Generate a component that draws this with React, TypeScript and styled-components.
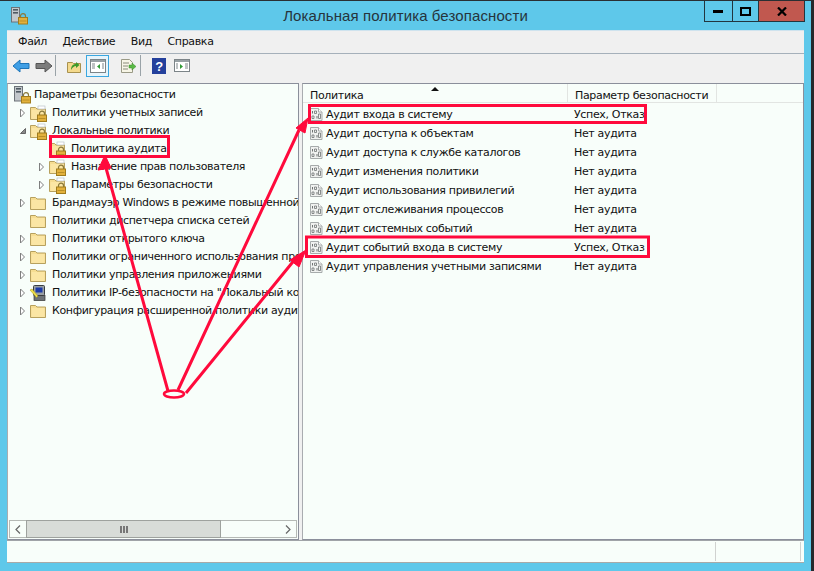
import React from "react";
import styled, { createGlobalStyle } from "styled-components";

const Global = createGlobalStyle`
  html, body { margin: 0; padding: 0; width: 814px; height: 571px; overflow: hidden; background: #5ec8ea; }
  * { box-sizing: border-box; }
`;
const Frame = styled.div`
  position: relative; width: 814px; height: 571px; background: #5ec8ea;
  border-top: 1px solid #2a2f33; border-right: 3px solid #25292c;
  font-family: "DejaVu Sans", sans-serif; font-size: 11px; letter-spacing: -0.34px; color: #111;
  display: flex; flex-direction: column; overflow: hidden;
`;
const TitleBar = styled.div`height: 29px; display: flex; position: relative; align-items: flex-start; padding-left: 10px;`;
const Title = styled.div`
  position: absolute; left: 0; right: 0; top: 6px; text-align: center; font-size: 15px; color: #26343c; letter-spacing: .1px;
  font-family: "Liberation Sans", sans-serif;
`;
const AppIcon = styled.div`margin-top: 5px; height: 18px;`;
const WinButtons = styled.div`margin-left: auto; display: flex; height: 21px; border: 1px solid #22363f; border-top: none; position: relative; margin-right: 6px; z-index: 1;`;
const WinButton = styled.div<{ $w: number; $close?: boolean }>`
  width: ${p => p.$w}px; display: flex; align-items: center; justify-content: center;
  background: ${p => (p.$close ? "#c1584f" : "#5ec8ea")};
  & + & { border-left: 1px solid #22363f; }
`;
const Client = styled.div`
  margin: 0 7px; height: 533px; background: #f0f0f0; display: flex; flex-direction: column;
  border-top: 1px solid #cfe3ee;
`;
const MenuBar = styled.div`height: 23px; display: flex; align-items: center; gap: 15.5px; padding-left: 11px; border-bottom: 1px solid #a5b0ba;`;
const ToolBar = styled.div`height: 29px; display: flex; align-items: flex-start; padding: 1px 0 0 2px;`;
const ToolButton = styled.div<{ $active?: boolean; $mr?: number }>`
  width: 23px; height: 22px; display: flex; align-items: center; justify-content: center; margin-right: ${p => p.$mr ?? 0}px;
  ${p => p.$active && "border: 1px solid #3aa7e0; background: #e6f4fb;"}
`;
const ToolSep = styled.div`width: 1px; height: 21px; background: #9aa3a8; margin-right: 6px;`;
const Panes = styled.div`height: 459px; display: flex;`;
const TreePane = styled.div`
  width: 292px; display: flex; flex-direction: column; background: #f8fefa;
  border: 1px solid #8b8f9b; border-left-color: #a9acb0; position: relative; padding-top: 2px;
`;
const Splitter = styled.div`width: 3px;`;
const ListPane = styled.div`flex: 1; background: #f8fefa; border: 1px solid #8b8f9b; border-left-color: #a9acb0; position: relative;`;
const TreeBody = styled.div`flex: 1; overflow: hidden;`;
const TreeRow = styled.div<{ $level: number }>`
  height: 18px; display: flex; align-items: center; white-space: nowrap; padding-left: ${p => p.$level * 19 + 8}px;
`;
const RootRow = styled(TreeRow)`padding-left: 5px;`;
const Twisty = styled.div`width: 13px; height: 18px; display: flex; align-items: center; justify-content: center; flex: none;`;
const NodeIcon = styled.div<{ $gap: number }>`width: 19px; height: 18px; flex: none; margin-right: ${p => p.$gap}px; display: flex; align-items: center;`;
const NodeLabel = styled.span``;
const ScrollBar = styled.div`height: 18px; margin: 0 0 1px 1px; display: flex; border: 1px solid #b5b9b5; background: #f8fefa; width: 288px;`;
const ScrollBtn = styled.div`width: 16px; display: flex; align-items: center; justify-content: center;`;
const Thumb = styled.div`
  width: 195px; background: #d8dcd8; border: 1px solid #9ea29e; margin: -1px 0; display: flex; align-items: center; justify-content: center; gap: 1px;
`;
const Grip = styled.i`width: 2px; height: 7px; background: #777;`;
const ScrollGap = styled.div`flex: 1;`;
const Header = styled.div`height: 19px; display: flex; border-bottom: 1px solid #e2e5e2; position: relative;`;
const HeaderCell = styled.div<{ $w: number }>`
  width: ${p => p.$w}px; padding: 4px 0 0 7px; border-right: 1px solid #e2e5e2; line-height: 15px;
`;
const SortMark = styled.div`position: absolute; left: 128px; top: 3px; width: 0; height: 0; border: 4px solid transparent; border-top: 0; border-bottom: 4px solid #111;`;
const RowsBox = styled.div`padding-top: 2px;`;
const ListRow = styled.div`height: 19px; display: flex; align-items: center; white-space: nowrap;`;
const NameCell = styled.div`width: 265px; padding-left: 6px; display: flex; align-items: center; gap: 2px;`;
const ValueCell = styled.div`padding-left: 6px;`;
const StatusBar = styled.div`height: 23px; display: flex; background: #f8fefa; border-top: 1px solid #a0a4a8; border-bottom: 1px solid #a8aaa8;`;
const StatusCell = styled.div<{ $w: number }>`width: ${p => p.$w}px; margin: 1px 0; border-right: 1px solid #d0d2d0;`;
const Overlay = styled.svg`position: absolute; left: 0; top: -1px; pointer-events: none;`;

const Lock = ({ x = 0, y = 0 }: { x?: number; y?: number }) => (
  <g transform={`translate(${x} ${y})`}>
    <path d="M2.500 4V2.600a2.500 2.500 0 0 1 5 0V4" fill="none" stroke="#8a7a3c" strokeWidth="1.200" />
    <rect x=".5" y="4" width="9" height="6.500" fill="#e2b13c" stroke="#a07c1c" />
    <rect x="1.500" y="7" width="7" height="1" fill="#b98f26" />
  </g>
);
const Folder = ({ lock }: { lock?: boolean }) => (
  <svg width="19" height="18" viewBox="0 0 19 18">
    <path d="M1.500 15.500V3.500h5l1.500 1.500h8.500v10.500z" fill="#f6dd92" stroke="#b7a15e" />
    <rect x="2.500" y="6" width="13" height="9" fill="#fbe6a4" />
    {lock && <rect x="9" y="2" width="7" height="3" fill="#fff" stroke="#b0b8c0" strokeWidth=".6" />}
    {lock && <Lock x={8} y={7} />}
  </svg>
);
const ServerIcon = () => (
  <svg width="19" height="19" viewBox="0 0 19 19">
    <rect x="1.500" y="1.500" width="8" height="14.500" fill="#c3c8cc" stroke="#6c7378" />
    <rect x="3" y="3" width="5" height="1.600" fill="#4f5a62" />
    <rect x="3" y="6" width="5" height="1.600" fill="#4f5a62" />
    <Lock x={8} y={7.500} />
  </svg>
);
const IpIcon = () => (
  <svg width="19" height="18" viewBox="0 0 19 18">
    <rect x="4.500" y="1.500" width="11" height="10" rx="1" fill="#9aa0a4" stroke="#3a3e42" />
    <rect x="6.500" y="3.500" width="7" height="5" fill="#1c3aa8" />
    <rect x="5" y="11.500" width="11" height="5" fill="#6d7276" stroke="#333" strokeWidth=".7" />
    <path d="M1 6l2-1 6 7-1.500 1.500z" fill="#f1e04a" stroke="#a59518" strokeWidth=".5" />
  </svg>
);
const Closed = () => (
  <svg width="7" height="10" viewBox="0 0 7 10"><path d="M1.500 1l4 4-4 4z" fill="#fff" stroke="#7f7f7f" /></svg>
);
const Opened = () => (
  <svg width="8" height="8" viewBox="0 0 8 8"><path d="M6.500 1.500v5h-5z" fill="#8a8a8a" stroke="#666" /></svg>
);
const AuditIcon = () => (
  <svg width="15" height="15" viewBox="0 0 15 15">
    <path d="M1.500 1.500h8l3.500 3.500v8.500H1.500z" fill="#f0f2f0" stroke="#a6abab" />
    <path d="M9.500 1.500V5H13" fill="#fff" stroke="#a6abab" />
    <path d="M3.500 4v2.500M8 9v2.500" stroke="#6f7373" />
    <path d="M5.500 4h2v2.500h-2zM3 9h2v2.500H3zM9.500 7h2v4.500h-2z" fill="none" stroke="#6f7373" strokeWidth=".8" />
  </svg>
);

const treeRows: { label: string; level: number; twisty?: "c" | "o"; icon: "lock" | "plain" | "ip" }[] = [
  { label: "Политики учетных записей", level: 1, twisty: "c", icon: "lock" },
  { label: "Локальные политики", level: 1, twisty: "o", icon: "lock" },
  { label: "Политика аудита", level: 2, icon: "lock" },
  { label: "Назначение прав пользователя", level: 2, twisty: "c", icon: "lock" },
  { label: "Параметры безопасности", level: 2, twisty: "c", icon: "lock" },
  { label: "Брандмауэр Windows в режиме повышенной безопасности", level: 1, twisty: "c", icon: "plain" },
  { label: "Политики диспетчера списка сетей", level: 1, icon: "plain" },
  { label: "Политики открытого ключа", level: 1, twisty: "c", icon: "plain" },
  { label: "Политики ограниченного использования программ", level: 1, twisty: "c", icon: "plain" },
  { label: "Политики управления приложениями", level: 1, twisty: "c", icon: "plain" },
  { label: "Политики IP-безопасности на \"Локальный компьютер\"", level: 1, twisty: "c", icon: "ip" },
  { label: "Конфигурация расширенной политики аудита", level: 1, twisty: "c", icon: "plain" },
];
const listRows = [
  ["Аудит входа в систему", "Успех, Отказ"],
  ["Аудит доступа к объектам", "Нет аудита"],
  ["Аудит доступа к службе каталогов", "Нет аудита"],
  ["Аудит изменения политики", "Нет аудита"],
  ["Аудит использования привилегий", "Нет аудита"],
  ["Аудит отслеживания процессов", "Нет аудита"],
  ["Аудит системных событий", "Нет аудита"],
  ["Аудит событий входа в систему", "Успех, Отказ"],
  ["Аудит управления учетными записями", "Нет аудита"],
];

const TreeClip = styled.div`overflow: hidden; width: 100%; min-width: 0; flex: 1;`;

export default function App() {
  return (
    <Frame>
      <Global />
      <TitleBar>
        <AppIcon><ServerIcon /></AppIcon>
        <Title>Локальная политика безопасности</Title>
        <WinButtons>
          <WinButton $w={27}>
            <svg width="11" height="4"><rect width="10" height="3" y="1" fill="#000" /></svg>
          </WinButton>
          <WinButton $w={26}>
            <svg width="11" height="9"><rect x="1" y="1" width="9" height="7" fill="none" stroke="#000" strokeWidth="2" /></svg>
          </WinButton>
          <WinButton $w={46} $close>
            <svg width="10" height="9"><path d="M1 .5l8 8M9 .5l-8 8" stroke="#000" strokeWidth="2.200" /></svg>
          </WinButton>
        </WinButtons>
      </TitleBar>
      <Client>
        <MenuBar>
          <span>Файл</span><span>Действие</span><span>Вид</span><span>Справка</span>
        </MenuBar>
        <ToolBar>
          <ToolButton>
            <svg width="18" height="14" viewBox="0 0 18 14"><path d="M1 7l7-6v3.500h9v5H8V13z" fill="#3f9fe6" stroke="#1d74b8" /></svg>
          </ToolButton>
          <ToolButton>
            <svg width="18" height="14" viewBox="0 0 18 14"><path d="M17 7l-7-6v3.500H1v5h9V13z" fill="#7c7c7c" stroke="#555" /></svg>
          </ToolButton>
          <ToolSep />
          <ToolButton $mr={1}>
            <svg width="16" height="16" viewBox="0 0 16 16"><path d="M1.500 14.500v-10h5l1 1h7v9z" fill="#f4d98c" stroke="#a8914f" /><path d="M5 12c0-4 2-6 5-6V4l3.500 3L10 10V8c-2 0-3 1-5 4z" fill="#3c9a2a" /></svg>
          </ToolButton>
          <ToolButton $active $mr={8}>
            <svg width="16" height="14" viewBox="0 0 16 14"><rect x=".5" y=".5" width="15" height="13" fill="#fff" stroke="#7c8488" /><rect x="1" y="1" width="14" height="2" fill="#97a0a4" /><path d="M10 5v5L7 7.500z" fill="#2f9a34" /><path d="M2 5h3M2 7h3M2 9h3M12 5h2M12 7h2M12 9h2" stroke="#7c8488" /></svg>
          </ToolButton>
          <ToolButton>
            <svg width="17" height="16" viewBox="0 0 17 16"><path d="M1.500 1.500h8l3 3v10h-11z" fill="#f7f5e6" stroke="#9a9a86" /><path d="M3 5h6M3 8h5M3 11h5" stroke="#8a8a7a" /><path d="M9 7h3V5l4 3.500-4 3.500v-2H9z" fill="#59b944" stroke="#3c8a2c" strokeWidth=".5" /></svg>
          </ToolButton>
          <ToolSep />
          <ToolButton>
            <svg width="14" height="16" viewBox="0 0 14 16"><rect width="14" height="16" fill="#24409c" /><text x="7" y="13" textAnchor="middle" fontSize="13" fontWeight="700" fill="#fff" fontFamily="Liberation Sans">?</text></svg>
          </ToolButton>
          <ToolButton>
            <svg width="16" height="13" viewBox="0 0 16 13"><rect x=".5" y=".5" width="15" height="12" fill="#fff" stroke="#7c8488" /><rect x="1" y="1" width="14" height="2" fill="#97a0a4" /><path d="M6 5v5l3-2.500z" fill="#2f9a34" /><path d="M2 5h2M2 7h2M2 9h2M11 5h3M11 7h3M11 9h3" stroke="#7c8488" /></svg>
          </ToolButton>
        </ToolBar>
        <Panes>
          <TreePane>
            <TreeBody>
              <RootRow $level={0}>
                <NodeIcon $gap={2}><ServerIcon /></NodeIcon><NodeLabel>Параметры безопасности</NodeLabel>
              </RootRow>
              {treeRows.map(r => (
                <TreeRow key={r.label} $level={r.level - 1}>
                  <Twisty>{r.twisty === "c" && <Closed />}{r.twisty === "o" && <Opened />}</Twisty>
                  <NodeIcon $gap={4}>
                    {r.icon === "lock" && <Folder lock />}
                    {r.icon === "plain" && <Folder />}
                    {r.icon === "ip" && <IpIcon />}
                  </NodeIcon>
                  <TreeClip><NodeLabel>{r.label}</NodeLabel></TreeClip>
                </TreeRow>
              ))}
            </TreeBody>
            <ScrollBar>
              <ScrollBtn>
                <svg width="6" height="9"><path d="M5 .5l-4 4 4 4" fill="none" stroke="#666" strokeWidth="1.200" /></svg>
              </ScrollBtn>
              <Thumb><Grip /><Grip /><Grip /></Thumb>
              <ScrollGap />
              <ScrollBtn>
                <svg width="6" height="9"><path d="M1 .5l4 4-4 4" fill="none" stroke="#666" strokeWidth="1.200" /></svg>
              </ScrollBtn>
            </ScrollBar>
          </TreePane>
          <Splitter />
          <ListPane>
            <Header>
              <HeaderCell $w={265}>Политика</HeaderCell>
              <HeaderCell $w={149}>Параметр безопасности</HeaderCell>
              <SortMark />
            </Header>
            <RowsBox>
              {listRows.map(([a, b]) => (
                <ListRow key={a}>
                  <NameCell><AuditIcon /><span>{a}</span></NameCell>
                  <ValueCell>{b}</ValueCell>
                </ListRow>
              ))}
            </RowsBox>
          </ListPane>
        </Panes>
        <StatusBar>
          <StatusCell $w={709} />
          <StatusCell $w={85} />
        </StatusBar>
      </Client>
      <Overlay width="814" height="571" viewBox="0 0 814 571" fill="none" stroke="#ff0a3c">
        <rect x="50.500" y="136.500" width="118" height="20" strokeWidth="3" />
        <rect x="309.500" y="105.500" width="336" height="17" strokeWidth="3" />
        <rect x="306.500" y="237" width="342" height="19.500" strokeWidth="3" />
        <ellipse cx="174" cy="394" rx="10" ry="3.500" strokeWidth="2.500" fill="#f8fefa" />
        <path d="M168 391L106 168M178 390L299 130M186 393L296 258" strokeWidth="3" />
        <path d="M105 155l-7 15 13-2zM308 118l-12 10 9 5zM306 250l-16 10 9 7z" fill="#ff0a3c" strokeWidth="1" />
      </Overlay>
    </Frame>
  );
}
